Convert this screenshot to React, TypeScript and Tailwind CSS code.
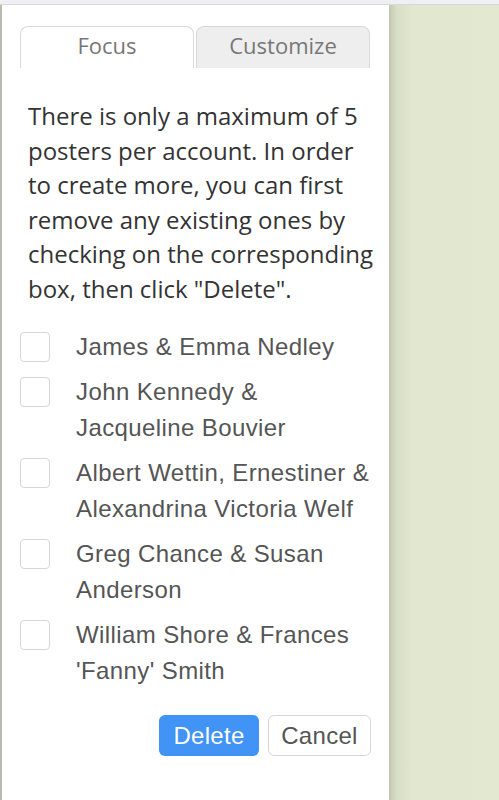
import React from "react";

const people: string[][] = [
  ["James & Emma Nedley"],
  ["John Kennedy &", "Jacqueline Bouvier"],
  ["Albert Wettin, Ernestiner &", "Alexandrina Victoria Welf"],
  ["Greg Chance & Susan", "Anderson"],
  ["William Shore & Frances", "'Fanny' Smith"],
];

const intro = [
  "There is only a maximum of 5",
  "posters per account. In order",
  "to create more, you can first",
  "remove any existing ones by",
  "checking on the corresponding",
  'box, then click "Delete".',
];

export default function App() {
  return (
    <div className="flex h-[800px] w-[499px] flex-col overflow-hidden">
      {/* top strip */}
      <div className="h-[5px] w-full border-b border-[#d6dae0] bg-[#eef0f4]" />

      <div className="flex flex-1">
        <div className="w-[2px] bg-[#b8baae]" />

        {/* Panel */}
        <div className="flex w-[387px] flex-col bg-white px-[18px] pt-[21px]">
          {/* Tabs */}
          <div className="flex gap-[2px] font-['Open_Sans',sans-serif] text-[22px] text-[#777]">
            <div className="flex h-[42px] w-[174px] items-center justify-center rounded-t-[8px] border border-b-0 border-[#d9d9d9] bg-white pb-[4px]">
              Focus
            </div>
            <div className="flex h-[42px] w-[174px] items-center justify-center rounded-t-[8px] border border-b-0 border-[#d9d9d9] bg-[#eeeeee] pb-[4px]">
              Customize
            </div>
          </div>

          {/* Intro */}
          <p className="mt-[31px] pl-[8px] font-['Open_Sans',sans-serif] text-[24px] leading-[34.5px] text-[#333]">
            {intro.map((line) => (
              <span key={line} className="block whitespace-nowrap">
                {line}
              </span>
            ))}
          </p>

          {/* Poster list */}
          <div className="mt-[23px] flex flex-col gap-[9px]">
            {people.map((lines) => (
              <label key={lines[0]} className="flex gap-[26px]">
                <span className="mt-[3px] h-[30px] w-[30px] shrink-0 rounded-[4px] border border-[#d6d6d6] bg-white" />
                <span className="font-['Liberation_Sans',Arial,sans-serif] text-[24px] leading-[36px] tracking-[0.4px] text-[#555]">
                  {lines.map((l) => (
                    <span key={l} className="block whitespace-nowrap">
                      {l}
                    </span>
                  ))}
                </span>
              </label>
            ))}
          </div>

          {/* Actions */}
          <div className="mt-[26px] flex justify-end gap-[9px] font-['Liberation_Sans',Arial,sans-serif] text-[24px] tracking-[0.3px]">
            <button className="h-[41px] w-[100px] rounded-[6px] bg-[#4193f5] text-white">
              Delete
            </button>
            <button className="h-[41px] w-[103px] rounded-[6px] border border-[#d6d6d6] bg-white text-[#555]">
              Cancel
            </button>
          </div>
        </div>

        {/* backdrop */}
        <div className="flex-1 bg-[linear-gradient(to_right,#c3c7b3,#d9dfc6_8px,#e1e8cf_24px,#e2e9d0)]" />
      </div>
    </div>
  );
}
